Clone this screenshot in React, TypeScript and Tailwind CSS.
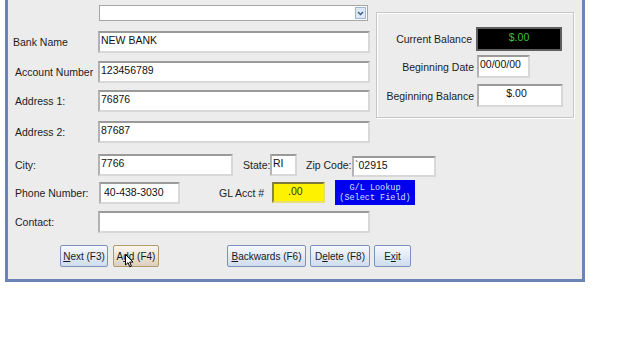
import React from "react";

const font = { fontFamily: '"Liberation Sans", Arial, sans-serif' };

function Field({ w, h = 22, value = "", className = "", textClass = "" }: { w: number; h?: number; value?: string; className?: string; textClass?: string }) {
  return (
    <div
      className={`bg-white border-2 border-t-[#9a9a9a] border-l-[#b2b2b2] border-r-[#d8d8d8] border-b-[#d8d8d8] text-[10.5px] leading-[12px] text-[#111] pl-[1px] pt-[1px] shrink-0 ${className}`}
      style={{ width: w, height: h }}
    >
      <span className={textClass}>{value}</span>
    </div>
  );
}

function Label({ children, className = "" }: { children: React.ReactNode; className?: string }) {
  return <div className={`text-[10.5px] text-[#1c1c1c] leading-[12px] ${className}`}>{children}</div>;
}

function Btn({ w, children, hover = false }: { w: number; children: React.ReactNode; hover?: boolean }) {
  return (
    <div
      className={`h-[22px] flex items-center justify-center rounded-[2px] border text-[10px] text-[#1a1a1a] shrink-0 ${
        hover
          ? "border-[#b49a6e] bg-gradient-to-b from-[#fbf6ee] to-[#dcd0bc]"
          : "border-[#7d92b8] bg-gradient-to-b from-[#f6f9fd] to-[#cfdcef]"
      }`}
      style={{ width: w }}
    >
      {children}
    </div>
  );
}

export default function App() {
  return (
    <div className="w-[640px] h-[360px] bg-white overflow-hidden relative" style={font}>
      <div className="ml-[5px] w-[580px] h-[282px] bg-[#ececec] border-l-[3px] border-r-[3px] border-b-[3px] border-[#6b84b6] flex flex-col">
        {/* top section */}
        <div className="flex">
          <div className="w-[368px] flex flex-col">
            {/* dropdown */}
            <div className="mt-[5px] ml-[91px] w-[269px] h-[16px] bg-white border border-[#a6a6a6] flex justify-end items-center pr-[1px]">
              <div className="w-[11px] h-[12px] bg-[#dde7f6] border border-[#9fb5d8] flex items-center justify-center">
                <svg width="7" height="5" viewBox="0 0 7 5">
                  <path d="M1 1 L3.5 3.5 L6 1" stroke="#3d5a8c" strokeWidth="1.4" fill="none" />
                </svg>
              </div>
            </div>
            <div className="mt-[10px] flex items-center h-[22px]">
              <Label className="w-[90px] pl-[5px]">Bank Name</Label>
              <Field w={272} value="NEW BANK" />
            </div>
            <div className="mt-[8px] flex items-center h-[22px]">
              <Label className="w-[90px] pl-[7px]">Account Number</Label>
              <Field w={272} value="123456789" />
            </div>
            <div className="mt-[7px] flex items-center h-[22px]">
              <Label className="w-[90px] pl-[7px]">Address 1:</Label>
              <Field w={272} value="76876" />
            </div>
            <div className="mt-[9px] flex items-center h-[22px]">
              <Label className="w-[90px] pl-[7px]">Address 2:</Label>
              <Field w={272} value="87687" />
            </div>
          </div>
          {/* group box */}
          <div className="mt-[12px] w-[198px] h-[106px] border border-[#c6c6c6] shadow-[inset_1px_1px_0_#ffffff,1px_1px_0_#ffffff] flex flex-col">
            <div className="mt-[14px] flex items-center h-[24px]">
              <Label className="w-[99px] text-right pr-[4px]">Current Balance</Label>
              <div className="w-[86px] h-[24px] bg-black border-2 border-[#5e5e5e] text-[10.5px] text-[#3fbf3f] text-center leading-[12px] pt-[2px]">$.00</div>
            </div>
            <div className="mt-[4px] flex items-center h-[23px]">
              <Label className="w-[100px] text-right pr-[3px]">Beginning Date</Label>
              <Field w={53} h={23} value="00/00/00" />
            </div>
            <div className="mt-[6px] flex items-center h-[23px]">
              <Label className="w-[100px] text-right pr-[3px]">Beginning Balance</Label>
              <Field w={86} h={23} value="$.00" className="text-center pr-[8px]" />
            </div>
          </div>
        </div>
        {/* City row */}
        <div className="mt-[11px] flex items-start h-[22px]">
          <Label className="w-[90px] pl-[7px] mt-[5px]">City:</Label>
          <Field w={135} value="7766" />
          <Label className="ml-[10px] w-[27px] mt-[5px]">State:</Label>
          <Field w={27} value="RI" />
          <Label className="ml-[9px] w-[46px] mt-[5px]">Zip Code:</Label>
          <Field w={84} h={21} value="`02915" className="mt-[2px]" />
        </div>
        {/* Phone row */}
        <div className="mt-[4px] flex items-center h-[25px]">
          <Label className="w-[91px] pl-[7px]">Phone Number:</Label>
          <Field w={81} value="40-438-3030" className="pl-[3px] pt-[2px]" />
          <Label className="ml-[39px] w-[53px]">GL Acct #</Label>
          <div className="w-[53px] h-[21px] bg-[#fff200] border-2 border-t-[#7e7a3a] border-l-[#8a8540] border-r-[#e8e070] border-b-[#e8e070] text-[10.5px] leading-[12px] text-[#333] pl-[14px] pt-[1px] shrink-0">.00</div>
          <div
            className="ml-[10px] w-[80px] h-[25px] bg-[#0000ee] text-[#d4e0ff] text-[8.5px] leading-[10px] flex flex-col items-center justify-center"
            style={{ fontFamily: '"Liberation Mono", "Courier New", monospace' }}
          >
            <div>G/L Lookup</div>
            <div>(Select Field)</div>
          </div>
        </div>
        {/* Contact row */}
        <div className="mt-[6px] flex items-center h-[22px]">
          <Label className="w-[90px] pl-[7px]">Contact:</Label>
          <Field w={272} value="" />
        </div>
        {/* buttons */}
        <div className="mt-[12px] flex items-center h-[22px] pl-[52px]">
          <Btn w={48}>
            <span><u>N</u>ext (F3)</span>
          </Btn>
          <div className="ml-[5px] relative">
            <Btn w={46} hover>
              <span>A<u>d</u>d (F4)</span>
            </Btn>
            <svg className="absolute left-[12px] top-[9px]" width="9" height="14" viewBox="0 0 9 14">
              <path d="M0.5 0.5 L0.5 11 L3 8.6 L4.8 12.8 L6.4 12.1 L4.7 8.1 L8 8.1 Z" fill="#fff" stroke="#000" strokeWidth="1" />
            </svg>
          </div>
          <div className="ml-[68px]">
            <Btn w={79}>
              <span><u>B</u>ackwards (F6)</span>
            </Btn>
          </div>
          <div className="ml-[4px]">
            <Btn w={60}>
              <span>D<u>e</u>lete (F8)</span>
            </Btn>
          </div>
          <div className="ml-[4px]">
            <Btn w={37}>
              <span>E<u>x</u>it</span>
            </Btn>
          </div>
        </div>
      </div>
    </div>
  );
}
